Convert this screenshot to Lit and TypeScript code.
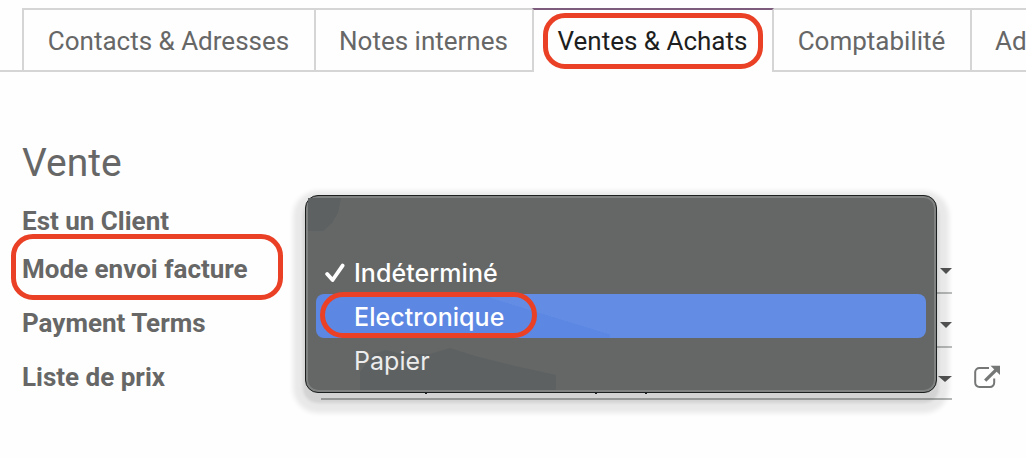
import { LitElement, html, css, svg } from "lit";
import { customElement, property, state } from 'lit/decorators.js';
import { classMap } from 'lit/directives/class-map.js';


@customElement('form-tabs')
export class FormTabs extends LitElement {
  static styles = css`
    :host {
      display: flex;
      flex-flow: row nowrap;
      height: 64px;
      padding-left: 22px;
      background: linear-gradient(#d5d5d5, #d5d5d5) left bottom / 22px 2px no-repeat;
    }
    .tab {
      box-sizing: border-box;
      display: flex;
      flex: none;
      align-items: center;
      justify-content: center;
      height: 64px;
      margin-right: -2px;
      padding: 2px 1px 0 0;
      border: 2px solid #d5d5d5;
      color: #666766;
      font-size: 26px;
      white-space: nowrap;
    }
    .contacts { width: 294px; }
    .notes { width: 220px; }
    .sales { width: 242px; }
    .accounting { width: 200px; }
    .more {
      width: 120px;
      justify-content: flex-start;
      padding-left: 23px;
    }
    .active {
      position: relative;
      color: #1d1e20;
      border-top-color: #7c5b7c;
      border-bottom-color: transparent;
    }
    .ring {
      position: absolute;
      top: 2.5px;
      left: 8.5px;
      box-sizing: border-box;
      width: 220.5px;
      height: 56px;
      border: 5px solid #ea4025;
      border-radius: 22px;
    }
  `;

  @property({ type: String }) active = 'sales';

  private tabs = [
    { id: 'contacts', label: 'Contacts & Adresses' },
    { id: 'notes', label: 'Notes internes' },
    { id: 'sales', label: 'Ventes & Achats' },
    { id: 'accounting', label: 'Comptabilité' },
    { id: 'more', label: 'Ad' },
  ];

  render() {
    return this.tabs.map(tab => html`
      <div
        class=${classMap({ tab: true, [tab.id]: true, active: tab.id === this.active })}
        @click=${() => { this.active = tab.id; }}
      >
        <span>${tab.label}</span>
        ${tab.id === this.active ? html`<i class='ring'></i>` : ``}
      </div>
    `);
  }
}


@customElement('select-menu')
export class SelectMenu extends LitElement {
  static styles = css`
    :host {
      box-sizing: border-box;
      display: block;
      width: 632px;
      height: 198px;
      padding: 10px;
      border: 1px solid #1c1f1f;
      border-radius: 13px;
      background: #656766;
      box-shadow:
        inset 0 0 0 2px #7f8281,
        0 8px 3px 2px rgba(0, 0, 0, 0.09),
        0 8px 5px 12px rgba(0, 0, 0, 0.085);
      color: #fff;
      font-family: Inter, "Liberation Sans", sans-serif;
      font-size: 25px;
      font-weight: 500;
      letter-spacing: 0.05px;
    }
    .tint {
      position: absolute;
      top: -1px;
      left: -1px;
      width: 632px;
      height: 198px;
      overflow: visible;
    }
    .option {
      position: relative;
      box-sizing: border-box;
      display: flex;
      align-items: center;
      height: 44px;
      padding: 2px 0 0 38px;
      border-radius: 8px;
    }
    .option:last-of-type {
      color: #ececec;
      font-weight: 400;
    }
    .highlighted {
      background: linear-gradient(197deg, #638de5 50%, #5c87e3 50.2%) 174px 0 / 120px 44px no-repeat,
        linear-gradient(90deg, #5c87e3 174px, #638de5 174px);
    }
    .check {
      position: absolute;
      left: 9px;
      top: 13px;
    }
    .ring {
      position: absolute;
      top: -2px;
      left: 3.5px;
      box-sizing: border-box;
      width: 217px;
      height: 46px;
      border: 5px solid #ea4025;
      border-radius: 23px;
    }
  `;

  @property({ type: Array }) options: string[] = [];
  @property({ type: String }) value = '';
  @property({ type: String }) highlighted = '';

  private tint = svg`
    <path fill='#5d6162' d='M3 3H36L33 18L27 28L18 36H3Z' />
    <path fill='#5d6162' d='M55 195V177L69 159L81 155L96 159H125L145 153L170 161L210 171L251 180V195Z' />
    <path fill='#1c1f1f' d='M120 198h2v1h-2zM290 198h2v1h-2zM340 198h2v1h-2z' />
  `;

  render() {
    return html`
      <svg class='tint' viewBox='0 0 632 198'>${this.tint}</svg>
      ${this.options.map(option => html`
        <div class=${classMap({ option: true, highlighted: option !== '' && option === this.highlighted })}>
          ${option !== '' && option === this.value ? html`
            <svg class='check' width='21' height='20' viewBox='0 0 21 20'>
              <path d='M2.2 11L7.6 17L17.6 2.6' fill='none' stroke='#fff' stroke-width='3.8' stroke-linecap='round' stroke-linejoin='round' />
            </svg>
          ` : ``}
          <span>${option}</span>
          ${option !== '' && option === this.highlighted ? html`<i class='ring'></i>` : ``}
        </div>
      `)}
    `;
  }
}


@customElement('app-root')
export class AppRoot extends LitElement {
  static styles = css`
    :host {
      position: relative;
      box-sizing: border-box;
      display: block;
      width: 1026px;
      height: 458px;
      padding-top: 8px;
      overflow: hidden;
      background: #fefefe;
      color: #666766;
      font-family: Roboto, "Liberation Sans", sans-serif;
    }
    h2 {
      margin: 0;
      padding: 68px 0 0 22px;
      font-size: 39px;
      font-weight: 400;
      line-height: 46px;
    }
    .fields {
      padding: 12px 0 0 22px;
    }
    .row {
      display: grid;
      grid-template-columns: 299px 631px auto;
      grid-template-rows: 100%;
      height: 54px;
    }
    .row:first-child { height: 46px; }
    .row:nth-child(2) { height: 50px; }
    .row:last-child { height: 52px; }
    .label {
      position: relative;
      font-size: 26px;
      font-weight: 700;
      line-height: 46px;
      white-space: nowrap;
    }
    .row:nth-child(2) .label { line-height: 50px; }
    .row:nth-child(3) .label { line-height: 58px; }
    .row:last-child .label { line-height: 58px; }
    .select {
      box-sizing: border-box;
      display: flex;
      align-items: flex-end;
      justify-content: flex-end;
      border-bottom: 2px solid #bcbdbd;
      padding-bottom: 18px;
    }
    .row:last-child .select {
      padding-bottom: 16px;
      border-bottom-color: #b4b5b5;
    }
    .caret {
      width: 0;
      border: 6px solid transparent;
      border-top-color: #555656;
      border-bottom: none;
    }
    .row:last-child .caret {
      border-left-width: 7px;
      border-right-width: 7px;
    }
    .open {
      padding: 17px 0 0 22px;
    }
    .ring {
      position: absolute;
      top: -10.5px;
      left: -11px;
      box-sizing: border-box;
      width: 272px;
      height: 66px;
      border: 5px solid #ea4025;
      border-radius: 22px;
    }
    select-menu {
      position: absolute;
      top: 195px;
      left: 305px;
    }
  `;

  @state() private mode = 'Indéterminé';

  private fields = [
    { label: 'Est un Client', select: false },
    { label: 'Mode envoi facture', select: true, ring: true },
    { label: 'Payment Terms', select: true },
    { label: 'Liste de prix', select: true, link: true },
  ];

  render() {
    return html`
      <form-tabs></form-tabs>
      <h2>Vente</h2>
      <div class='fields'>
        ${this.fields.map(field => html`
          <div class='row'>
            <div class='label'>
              <span>${field.label}</span>
              ${field.ring ? html`<i class='ring'></i>` : ``}
            </div>
            ${field.select ? html`<div class='select'><i class='caret'></i></div>` : ``}
            ${field.link ? html`
              <div class='open'>
                <svg width='27' height='24' viewBox='0 0 27 24' fill='none' stroke='#757676'>
                  <path d='M15 2.9H5.5A4.2 4.2 0 0 0 1.2 7.1V17.8A4.2 4.2 0 0 0 5.5 22H16A4.2 4.2 0 0 0 20.2 17.8V13.5' stroke-width='2' />
                  <path d='M11.2 15.6L22 5' stroke-width='3.2' />
                  <path d='M16.5 .8H26V10Z' fill='#757676' stroke='none' />
                </svg>
              </div>
            ` : ``}
          </div>
        `)}
      </div>
      <select-menu
        .options=${['', 'Indéterminé', 'Electronique', 'Papier']}
        .value=${this.mode}
        highlighted='Electronique'
      ></select-menu>
    `;
  }
}
